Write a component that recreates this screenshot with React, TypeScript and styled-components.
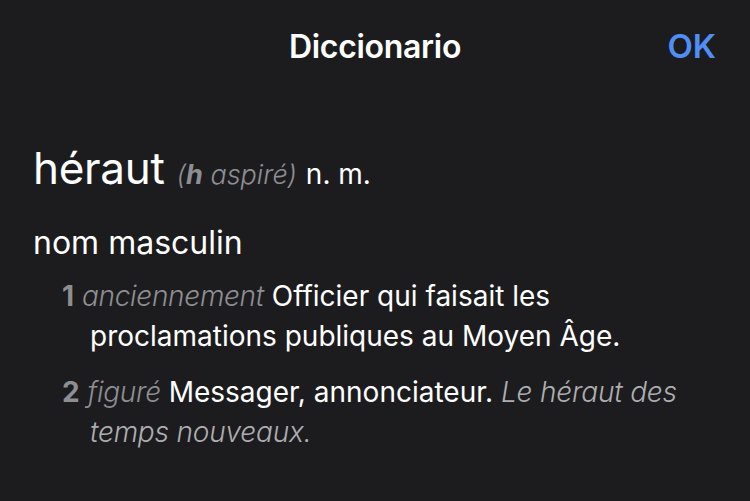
import React from 'react'
import styled, { createGlobalStyle } from 'styled-components'

const GlobalStyle = createGlobalStyle`
    html, body {
        margin: 0;
        padding: 0;
        background: #1c1c1e;
    }
    body {
        font-family: Inter, "Noto Sans", sans-serif;
        color: #ffffff;
    }
`

const Sheet = styled('div')`
    width: 750px;
    height: 501px;
    background: #1c1c1e;
    overflow: hidden;
`

const NavBar = styled('header')`
    display: grid;
    grid-template-columns: 1fr auto 1fr;
    align-items: center;
    height: 92px;
    padding: 0 34px;
    box-sizing: border-box;
`

const NavTitle = styled('h1')`
    grid-column: 2;
    margin: 0;
    font-size: 32px;
    font-weight: 600;
    letter-spacing: -0.3px;
`

const DoneButton = styled('button')`
    justify-self: end;
    background: none;
    border: none;
    padding: 0;
    color: #4f8ef5;
    font-family: inherit;
    font-size: 33px;
    font-weight: 600;
    cursor: pointer;
`

const Entry = styled('main')`
    padding: 49px 56px 0 33px;
`

const HeadLine = styled('div')`
    display: flex;
    align-items: baseline;
    gap: 12px;
`

const HeadWord = styled('span')`
    font-size: 44px;
    font-weight: 400;
    letter-spacing: -0.3px;
`

const Note = styled('span')`
    font-size: 27px;
    font-style: italic;
    font-weight: 300;
    color: #8e8e93;

    b {
        font-weight: 700;
    }
`

const Abbr = styled('span')`
    font-size: 28px;
    margin-left: -3px;
`

const Category = styled('div')`
    font-size: 32px;
    margin-top: 28px;
`

const Senses = styled('ol')`
    list-style: none;
    margin: 14px 0 0;
    padding: 0;
`

const Sense = styled('li')`
    font-size: 28px;
    line-height: 40px;
    padding-left: 57px;
    text-indent: -28px;
    margin-bottom: 16px;
`

const Num = styled('b')`
    color: #8e8e93;
    font-weight: 700;
`

const Usage = styled('i')`
    color: #8e8e93;
    font-weight: 300;
    letter-spacing: -0.3px;
`

const Example = styled('i')`
    color: #aeaeb2;
    font-weight: 300;
    letter-spacing: -0.2px;
`

export default function App() {
    return (
        <Sheet>
            <GlobalStyle />
            <NavBar>
                <NavTitle>Diccionario</NavTitle>
                <DoneButton>OK</DoneButton>
            </NavBar>
            <Entry>
                <HeadLine>
                    <HeadWord>héraut</HeadWord>
                    <Note>(<b>h</b> aspiré)</Note>
                    <Abbr>n. m.</Abbr>
                </HeadLine>
                <Category>nom masculin</Category>
                <Senses>
                    <Sense>
                        <Num>1</Num> <Usage>anciennement</Usage> Officier qui faisait les proclamations publiques au Moyen Âge.
                    </Sense>
                    <Sense>
                        <Num>2</Num> <Usage>figuré</Usage> Messager, annonciateur. <Example>Le héraut des temps nouveaux.</Example>
                    </Sense>
                </Senses>
            </Entry>
        </Sheet>
    )
}
